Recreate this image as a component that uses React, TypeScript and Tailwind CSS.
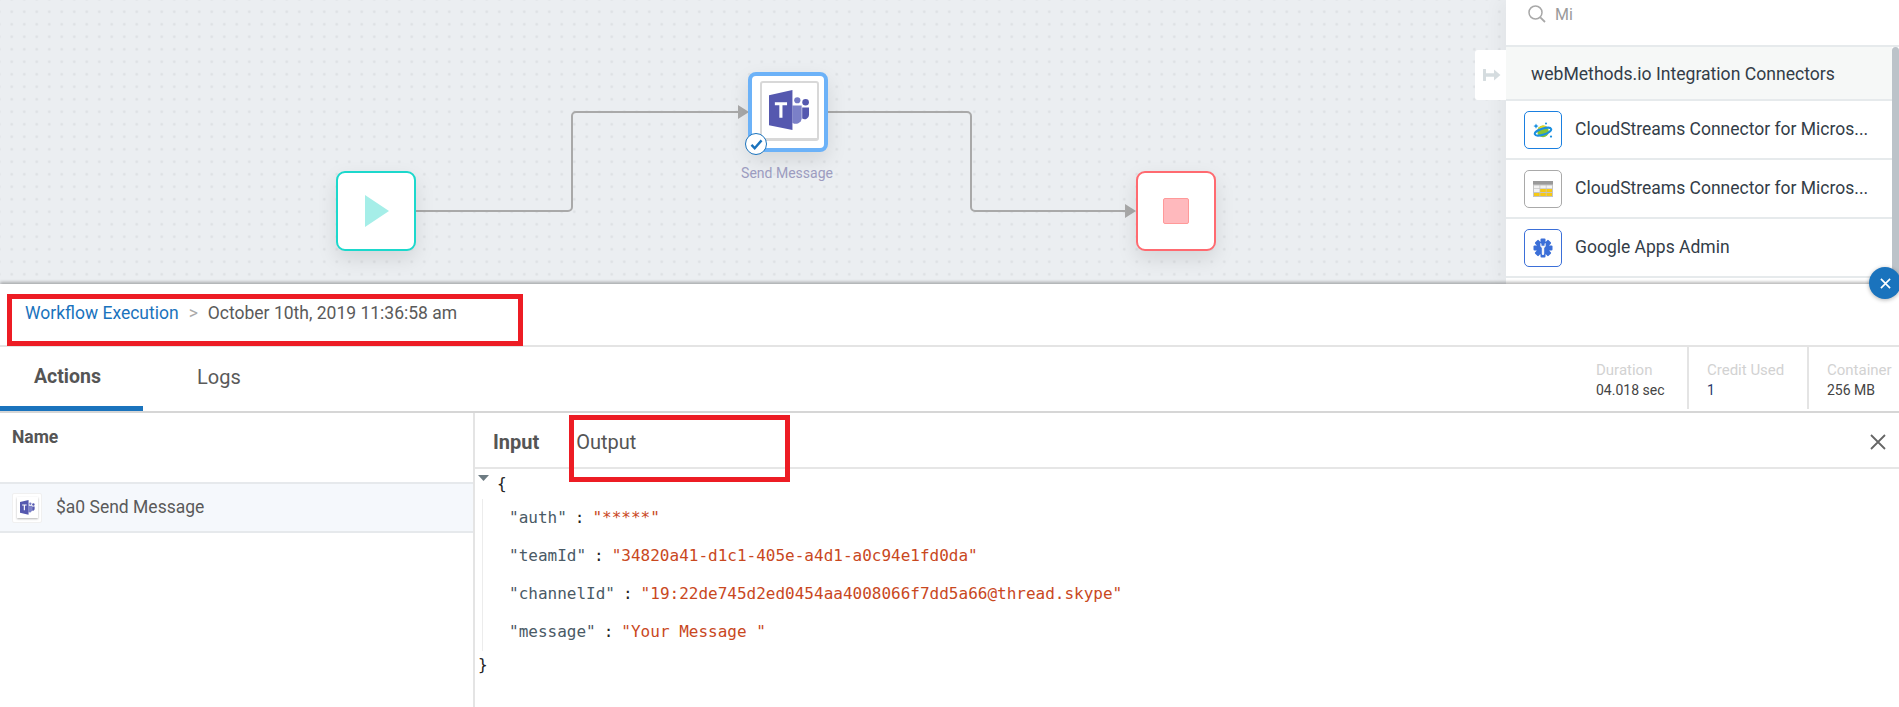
import React from "react";

function TeamsIcon({ className }: { className?: string }) {
  return (
    <svg viewBox="0 0 42 42" className={className}>
      <circle cx="29" cy="10.5" r="3.2" fill="#7378c4" />
      <circle cx="37.5" cy="12.5" r="3.4" fill="#5558af" />
      <path d="M24 16h9.5v13a6 6 0 0 1-9.5 4.5z" fill="#7b80c8" />
      <path d="M34 18h7v7.5a4.5 4.5 0 0 1-7 3.6z" fill="#5558af" />
      <path d="M0 5.5 24 0v41L0 36z" fill="#5558af" />
      <path d="M6 12.5h12.5v3h-4.7v13h-3.2v-13H6z" fill="#fff" />
    </svg>
  );
}

function CosmosIcon() {
  return (
    <svg viewBox="0 0 20 16" className="h-[16px] w-[20px]">
      <circle cx="10" cy="9.400" r="5.800" fill="#86c234" />
      <path d="M5 7c1.500-3.500 6-4.500 9-2.500-2 2-5.500 3.500-9 2.500z" fill="#e6d61e" />
      <ellipse cx="10" cy="9.600" rx="8.600" ry="3" transform="rotate(-18 10 9.600)" fill="none" stroke="#1a8fe0" strokeWidth="2" />
      <path d="M3 1.500l.8 1.800 1.800.8-1.800.8L3 6.700l-.8-1.800L.4 4.100l1.800-.8z" fill="#1a8fe0" />
      <circle cx="18" cy="14.600" r="1.100" fill="#1a8fe0" />
      <circle cx="13" cy="1.600" r="1" fill="#1a8fe0" />
    </svg>
  );
}

function TableIcon() {
  return (
    <svg viewBox="0 0 20 16" className="h-[16px] w-[20px]">
      <rect width="20" height="16" fill="#c4c4c4" />
      <rect width="20" height="3.500" fill="#9a9a9a" />
      <rect x="1" y="4.500" width="5.500" height="2.800" fill="#f2f2f2" />
      <rect x="7.300" y="4.500" width="5.500" height="2.800" fill="#f2f2f2" />
      <rect x="13.500" y="4.500" width="5.500" height="2.800" fill="#f2f2f2" />
      <rect x="1" y="8" width="5.500" height="3" fill="#f2f2f2" />
      <rect x="7.300" y="8" width="5.500" height="3" fill="#f6c915" />
      <rect x="13.500" y="8" width="5.500" height="3" fill="#f6c915" />
      <rect x="1" y="12" width="5.500" height="3" fill="#f6c915" />
      <rect x="7.300" y="12" width="5.500" height="3" fill="#f6c915" />
      <rect x="13.500" y="12" width="5.500" height="3" fill="#f6c915" />
    </svg>
  );
}

function AdminIcon() {
  return (
    <svg viewBox="0 0 20 20" className="h-[20px] w-[20px]">
      <g fill="#3b6fd8">
        <circle cx="10" cy="10" r="6.800" />
        <rect x="7.500" y="0.500" width="5" height="4" rx="1" />
        <rect x="7.500" y="15.500" width="5" height="4" rx="1" />
        <rect x="0.500" y="7.500" width="4" height="5" rx="1" />
        <rect x="15.500" y="7.500" width="4" height="5" rx="1" />
        <rect x="7.500" y="0.500" width="5" height="4" rx="1" transform="rotate(45 10 10)" />
        <rect x="7.500" y="15.500" width="5" height="4" rx="1" transform="rotate(45 10 10)" />
        <rect x="0.500" y="7.500" width="4" height="5" rx="1" transform="rotate(45 10 10)" />
        <rect x="15.500" y="7.500" width="4" height="5" rx="1" transform="rotate(45 10 10)" />
      </g>
      <path d="M7.300 5v3.200L8.800 10v5.500c0 2 2.400 2 2.400 0V10l1.500-1.800V5l-1.200.8v2H8.500v-2z" fill="#f4f5f8" />
    </svg>
  );
}

function ListRow({ icon, border, label }: { icon: React.ReactNode; border: string; label: string }) {
  return (
    <div className="flex h-[59px] items-center border-b-2 border-[#e6eaec] pl-[18px]">
      <div className={`flex h-[38px] w-[38px] items-center justify-center rounded-[5px] border bg-white ${border}`}>{icon}</div>
      <span className="ml-[13px] text-[17.5px] text-[#333d48]">{label}</span>
    </div>
  );
}

function Stat({ label, value, valueClass, className }: { label: string; value: string; valueClass: string; className: string }) {
  return (
    <div className={`mb-[2px] pt-[13px] text-[14px] leading-[20px] ${className}`}>
      <div className="text-[15px] text-[#d2d2d2]">{label}</div>
      <div className={valueClass}>{value}</div>
    </div>
  );
}

function JsonLine({ k, v }: { k: string; v: string }) {
  return (
    <div className="flex h-[38px] items-center whitespace-pre">
      <span className="text-[#4a5a66]">{k}</span>
      <span className="mx-[8px] text-[#222]">:</span>
      <span className="text-[#c9481e]">{v}</span>
    </div>
  );
}

export default function App() {
  return (
    <div className="relative flex h-[707px] w-[1899px] flex-col overflow-hidden bg-white font-['Roboto',sans-serif]">
      {/* top: canvas + palette */}
      <div className="flex h-[284px] shrink-0">
        <div className="relative flex-1 bg-[#ebeef1] bg-[radial-gradient(#dce0e3_0.8px,transparent_1.8px)] bg-[length:12.5px_12.5px] bg-[position:5.5px_5.5px]">
          <svg className="absolute left-0 top-0" width="1506" height="284" fill="none">
            <path d="M415 211H568a4 4 0 0 0 4-4V116a4 4 0 0 1 4-4H740" stroke="#a9a9a9" strokeWidth="2" />
            <path d="M738 105l11 7-11 7z" fill="#a9a9a9" />
            <path d="M828 112H967a4 4 0 0 1 4 4v91a4 4 0 0 0 4 4h153" stroke="#a9a9a9" strokeWidth="2" />
            <path d="M1125 204l11 7-11 7z" fill="#a9a9a9" />
          </svg>

          {/* start node */}
          <div className="absolute left-[335.500px] top-[171px] flex h-[80px] w-[80px] items-center justify-center rounded-[9px] border-[2px] border-[#1cd8cc] bg-white shadow-[0_8px_20px_rgba(0,0,0,0.1)]">
            <svg viewBox="0 0 24 32" className="ml-[2px] h-[32px] w-[24px]">
              <path d="M0 0l24 16L0 32z" fill="#a5eee8" />
            </svg>
          </div>

          {/* teams node */}
          <div className="absolute left-[748px] top-[72px] flex h-[80px] w-[80px] items-center justify-center rounded-[8px] border-[4px] border-[#6cb2f8] bg-white shadow-[0_8px_20px_rgba(0,0,0,0.1)]">
            <div className="ml-[2px] mt-[-2px] flex h-[60px] w-[59px] items-center justify-center rounded-[3px] border-2 border-b-[3px] border-[#d8d8d8] bg-white">
              <TeamsIcon className="h-[41px] w-[41px]" />
            </div>
            <div className="absolute bottom-[-7px] left-[-7px] flex h-[22px] w-[22px] items-center justify-center rounded-full border border-[#1a73bd] bg-white">
              <svg viewBox="0 0 14 12" className="h-[11px] w-[13px]" fill="none">
                <path d="M1.500 6.500 5 10l7.500-8.500" stroke="#1a73bd" strokeWidth="2.600" />
              </svg>
            </div>
          </div>
          <div className="absolute left-[707px] top-[164px] w-[160px] text-center text-[14px] leading-[18px] text-[#9c9cc0]">Send Message</div>

          {/* stop node */}
          <div className="absolute left-[1136px] top-[171px] flex h-[80px] w-[80px] items-center justify-center rounded-[9px] border-[2px] border-[#ff6a70] bg-white shadow-[0_8px_20px_rgba(0,0,0,0.1)]">
            <div className="h-[26px] w-[26px] rounded-[2px] border border-[#f99] bg-[#ffb9bd]" />
          </div>
        </div>

        {/* palette */}
        <div className="relative flex w-[393px] flex-col bg-white shadow-[-8px_0_16px_rgba(0,0,0,0.035)]">
          {/* palette toggle */}
          <div className="absolute left-[-31px] top-[50px] flex h-[50px] w-[31px] items-center justify-center rounded-l-[3px] bg-white">
            <svg viewBox="0 0 18 12" className="ml-[2px] h-[12px] w-[18px]" fill="none">
              <path d="M1.500 1v10" stroke="#d5dcdf" strokeWidth="3" strokeLinecap="round" />
              <path d="M2 6h11" stroke="#d5dcdf" strokeWidth="3.500" />
              <path d="M11 .5l6.500 5.500-6.500 5.500z" fill="#d5dcdf" />
            </svg>
          </div>
          <div className="flex h-[47px] shrink-0 items-start border-b-2 border-[#e6eaec] pl-[22px] pt-[5px]">
            <svg viewBox="0 0 18 18" className="h-[18px] w-[18px]" fill="none">
              <circle cx="7.500" cy="7.500" r="6.500" stroke="#a8a8a8" strokeWidth="1.500" />
              <path d="M12.300 12.300 17 17" stroke="#a8a8a8" strokeWidth="1.800" />
            </svg>
            <span className="ml-[9px] mt-[1px] text-[16px] leading-[18px] text-[#9a9a9a]">Mi</span>
          </div>
          <div className="flex flex-1">
            <div className="flex-1">
              <div className="flex h-[54px] items-center border-b-2 border-[#e6eaec] bg-[#f6f8f7] pl-[25px] pt-[2px] text-[17.6px] text-[#333d48]">
                webMethods.io Integration Connectors
              </div>
              <ListRow icon={<CosmosIcon />} border="border-[#1a7fe0]" label="CloudStreams Connector for Micros..." />
              <ListRow icon={<TableIcon />} border="border-[#a9a9a9]" label="CloudStreams Connector for Micros..." />
              <ListRow icon={<AdminIcon />} border="border-[#3b6fd8]" label="Google Apps Admin" />
            </div>
            <div className="w-[7px] rounded-t-[4px] bg-[#bcc3c9]" />
          </div>
        </div>
      </div>

      {/* bottom panel */}
      <div className="z-10 flex flex-1 flex-col bg-white shadow-[0_-2px_3px_rgba(0,0,0,0.28)]">
        <div className="flex h-[63px] shrink-0 items-center border-b-2 border-[#e4e4e4] pb-[3px] pl-[25px] text-[17.5px]">
          <span className="text-[#1a73bd]">Workflow Execution</span>
          <span className="mx-[10px] text-[#aaa]">&gt;</span>
          <span className="text-[#5a5a5a]">October 10th, 2019 11:36:58 am</span>
        </div>
        <div className="flex h-[66px] shrink-0 justify-between border-b-2 border-[#d6d6d6]">
          <div className="flex">
            <div className="flex w-[143px] items-center border-b-[5px] border-[#1a73bd] pl-[34px] text-[19.5px] font-bold text-[#555]">Actions</div>
            <div className="ml-[54px] flex items-center pb-[5px] text-[20px] text-[#5a5a5a]">Logs</div>
          </div>
          <div className="flex">
            <Stat label="Duration" value="04.018 sec" valueClass="text-[#444]" className="w-[91px]" />
            <Stat label="Credit Used" value="1" valueClass="text-[#2b3a6e]" className="w-[120px] border-l-2 border-[#e4e4e4] pl-[18px]" />
            <Stat label="Container" value="256 MB" valueClass="text-[#444]" className="w-[92px] border-l-2 border-[#e4e4e4] pl-[18px]" />
          </div>
        </div>
        <div className="flex flex-1">
          <div className="w-[475px] shrink-0 border-r-2 border-[#e4e4e4]">
            <div className="flex h-[69px] items-start pl-[12px] pt-[13px] text-[17.5px] font-bold leading-[22px] text-[#555]">Name</div>
            <div className="flex h-[51px] items-center border-y-2 border-[#e6e9ec] bg-[#f5f8fc] pl-[12px]">
              <div className="flex h-[30px] w-[30px] items-center justify-center rounded-[2px] border border-[#f0f0f0] bg-white">
                <div className="flex h-[21px] w-[21px] items-center justify-center bg-white shadow-[0_1px_2px_rgba(0,0,0,0.3)]">
                  <TeamsIcon className="h-[15px] w-[15px]" />
                </div>
              </div>
              <span className="ml-[14px] text-[17.5px] text-[#5a5a5a]">$a0 Send Message</span>
            </div>
          </div>
          <div className="flex flex-1 flex-col">
            <div className="flex h-[56px] shrink-0 items-center justify-between border-b-2 border-[#e6e6e6] pr-[13px] pt-[3px]">
              <div className="flex items-center text-[20px]">
                <span className="ml-[18px] font-bold text-[#555]">Input</span>
                <span className="ml-[37px] text-[#555]">Output</span>
              </div>
              <svg viewBox="0 0 16 16" className="h-[16px] w-[16px]" fill="none">
                <path d="M1 1l14 14M15 1 1 15" stroke="#666" strokeWidth="1.800" />
              </svg>
            </div>
            <div className="pl-[3px] font-['DejaVu_Sans_Mono',monospace] text-[16px] text-[#222]">
              <div className="flex h-[30px] items-center">
                <svg viewBox="0 0 11 6" className="mt-[-12px] h-[6px] w-[11px]">
                  <path d="M0 0h11L5.500 6z" fill="#6d7b82" />
                </svg>
                <span className="ml-[8px]">{"{"}</span>
              </div>
              <div className="ml-[4px] border-l border-[#ececec] pl-[26px]">
                <JsonLine k={'"auth"'} v={'"*****"'} />
                <JsonLine k={'"teamId"'} v={'"34820a41-d1c1-405e-a4d1-a0c94e1fd0da"'} />
                <JsonLine k={'"channelId"'} v={'"19:22de745d2ed0454aa4008066f7dd5a66@thread.skype"'} />
                <JsonLine k={'"message"'} v={'"Your Message "'} />
              </div>
              <div className="flex h-[30px] items-start pt-[2px]">{"}"}</div>
            </div>
          </div>
        </div>
      </div>

      {/* annotation rectangles */}
      <div className="pointer-events-none absolute left-[7px] top-[294px] z-20 h-[52px] w-[516px] border-[5px] border-[#ed1c24]" />
      <div className="pointer-events-none absolute left-[569px] top-[415px] z-20 h-[67px] w-[221px] border-[5px] border-[#ed1c24]" />

      {/* close bubble */}
      <div className="absolute left-[1869px] top-[267px] z-20 flex h-[32px] w-[32px] items-center justify-center rounded-full bg-[#1a73bd] shadow-[0_1px_4px_rgba(0,0,0,0.3)]">
        <svg viewBox="0 0 12 12" className="h-[11px] w-[11px]" fill="none">
          <path d="M1 1l10 10M11 1 1 11" stroke="#fff" strokeWidth="1.800" />
        </svg>
      </div>
    </div>
  );
}
